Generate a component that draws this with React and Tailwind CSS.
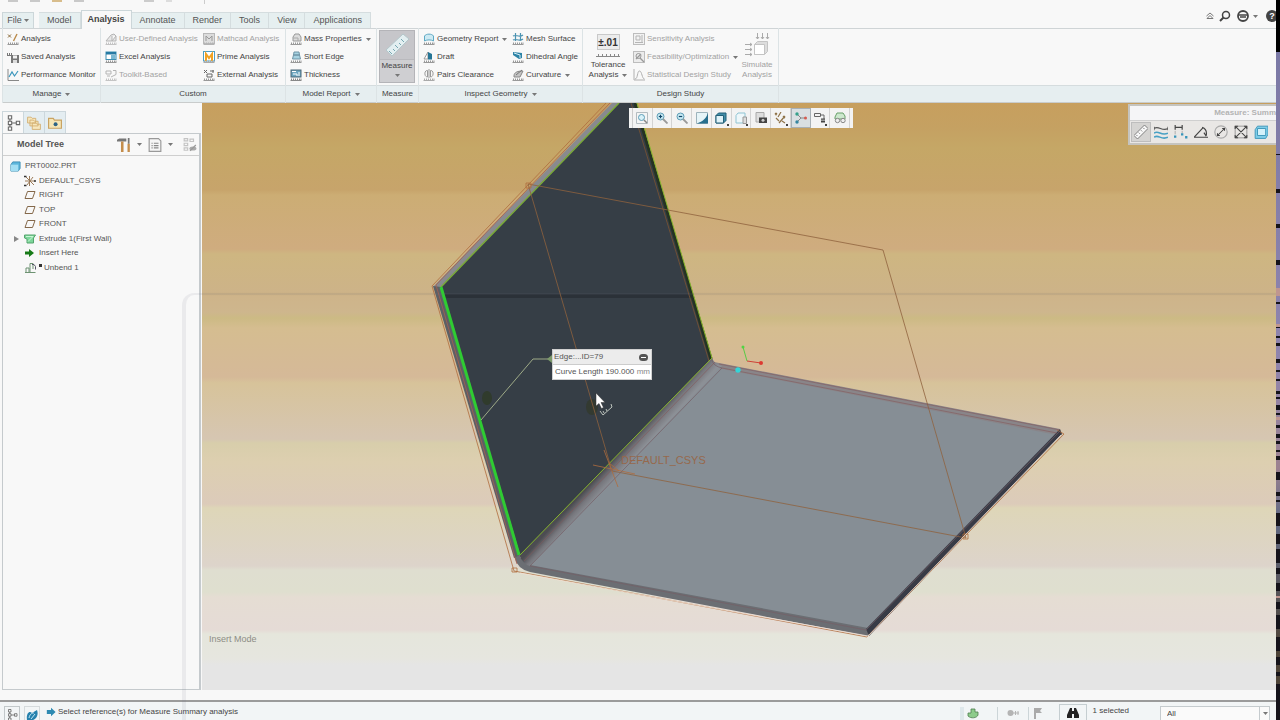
import React from "react";

const RULER = "M.5 11.5h11M1.5 11V9.5M3.5 11V9.5M5.5 11V9.5M7.5 11V9.5M9.5 11V9.5M11 11V9.5";

const drawings = {
  analysis: (
    <>
      <path d={RULER} stroke="#999" />
      <path d="M1 1.500l3 3M4 1.500L1 4.500" stroke="#8a6a3a" />
      <path d="M10 1L6.500 8" stroke="#b98a4a" strokeWidth="1.4" />
    </>
  ),
  saved: (
    <>
      <path d="M.5 2v2M2.5 2v2M4.5 2v2M0 4.5h6" stroke="#777" />
      <rect x="4" y="4" width="8" height="8" fill="#777" />
      <rect x="6" y="4.500" width="4" height="3" fill="#f2f2f2" />
      <rect x="6" y="9" width="4" height="3" fill="#ddd" />
    </>
  ),
  monitor: (
    <>
      <path d="M1 0v11.5h11" stroke="#888" />
      <path d="M2 8l3-5 2.500 4L11 2" stroke="#3d97bd" strokeWidth="1.2" />
    </>
  ),
  userDefined: (
    <>
      <path d={RULER} stroke="#c4c4c4" />
      <path d="M1 8l5-6 3-1 2 2-4 5zM7 3v5h4V3" stroke="#b5b5b5" fill="#e8e8e8" />
    </>
  ),
  excel: (
    <>
      <path d={RULER} stroke="#999" />
      <rect x="1" y="1" width="10" height="7.5" fill="#fff" stroke="#3c8fb2" />
      <rect x="1" y="1" width="10" height="2.5" fill="#267aa3" />
      <rect x="6" y="4" width="4.500" height="4" fill="#7ab8d2" />
    </>
  ),
  toolkit: (
    <>
      <path d={RULER} stroke="#c4c4c4" />
      <path d="M1 2h5v3H1zM8 1.500h3v4L6 8M2 7h3" stroke="#b4b4b4" />
    </>
  ),
  mathcad: (
    <>
      <rect x=".5" y=".5" width="11" height="10" fill="#dcdcdc" stroke="#b8b8b8" />
      <path d="M3 8V3l3 3 3-3v5" stroke="#999" />
      <path d={RULER} stroke="#b4b4b4" />
    </>
  ),
  prime: (
    <>
      <rect x=".5" y=".5" width="11" height="9.500" fill="#fff" stroke="#4d9fc4" />
      <path d="M3 10V3l3 4 3-4v7" stroke="#f0a224" strokeWidth="2" />
      <path d={RULER} stroke="#aaa" />
    </>
  ),
  external: (
    <>
      <path d={RULER} stroke="#999" />
      <path d="M1 1l3 3M4 1L1 4M10 1v3M7 2h4M4 8V5h5v3z" stroke="#666" />
    </>
  ),
  mass: (
    <>
      <path d={RULER} stroke="#999" />
      <path d="M3 8V4l2-3h4l2 3v4z" fill="#dcdcdc" stroke="#999" />
      <path d="M3 5h5v3" stroke="#aaa" />
    </>
  ),
  shortEdge: (
    <>
      <path d={RULER} stroke="#999" />
      <path d="M4 1h5l.5 3h-6zM2.500 8l1-4h6l1 4z" fill="#a6d2e1" stroke="#6f94a6" />
    </>
  ),
  thickness: (
    <>
      <path d={RULER} stroke="#888" />
      <rect x="1" y="1" width="10" height="7" fill="#6da6c0" stroke="#4b6676" />
      <path d="M2 2.500h4M3 5h4v2M9 3v4" stroke="#fff" />
    </>
  ),
  geometry: (
    <>
      <path d={RULER} stroke="#999" />
      <path d="M1.500 8V3C3 .5 9 .5 10.500 3v5C8 6.500 4 6.500 1.500 8z" fill="#cdeaf3" stroke="#5fa9c4" />
    </>
  ),
  draft: (
    <>
      <path d={RULER} stroke="#999" />
      <path d="M5 1v7H1z" fill="#fff" stroke="#999" />
      <path d="M5 1l4 2v5.500H5z" fill="#257596" />
    </>
  ),
  pairs: (
    <>
      <path d={RULER} stroke="#aaa" />
      <path d="M4.500 1.500C1 1 1 8 4.500 8zM7.500 1.500C11 1 11 8 7.500 8zM6 0v9" stroke="#999" />
    </>
  ),
  mesh: (
    <>
      <path d={RULER} stroke="#999" />
      <path d="M1 3c3-2 6 2 10-1M1 7c3-2 6 2 10-1M3.500 0v8M8.500 0v8" stroke="#4a92b1" strokeWidth="1.200" />
    </>
  ),
  dihedral: (
    <>
      <path d={RULER} stroke="#999" />
      <path d="M1 1l9 1v5L7 8 1 4z" fill="#2d83a6" />
      <path d="M2 2l6 2v3" stroke="#d6eef6" />
    </>
  ),
  curvature: (
    <>
      <path d={RULER} stroke="#999" />
      <path d="M2 7c0-4 4-5 9-5L8 8H2z" fill="#c4c4c4" stroke="#888" />
      <path d="M4 6l6-5" stroke="#777" />
    </>
  ),
  sensitivity: (
    <>
      <rect x=".5" y=".5" width="11" height="11" fill="#f2f2f2" stroke="#bdbdbd" />
      <path d="M3 3h4v4H3zM9 2v8M2 9.500h8" stroke="#b5b5b5" />
    </>
  ),
  feasibility: (
    <>
      <rect x=".5" y=".5" width="11" height="11" fill="#ececec" stroke="#bdbdbd" />
      <circle cx="5.500" cy="5" r="2.500" stroke="#999" />
      <path d="M7 7l4 4M3 8l5-5" stroke="#999" strokeWidth="1.300" />
    </>
  ),
  statistical: (
    <path d="M1 0v11h11M2 10c3 0 2-8 4.500-8S9 10 11.500 10" stroke="#b0b0b0" />
  ),
  part: (
    <>
      <path d="M1 4l2-3h8v7l-2 3H1z" fill="#5cb6dc" stroke="#3d8db3" />
      <path d="M1 4h8v7H1z" fill="#a3def3" />
    </>
  ),
  csys: (
    <>
      <path d="M2 2l8 8M9 2L3 10M5.500 1v10M1 6h10" stroke="#9b7a58" />
      <path d="M0 1.500h2.500M0 10.500h2.500M10 6h2" stroke="#333" strokeWidth="1.500" />
    </>
  ),
  plane: <path d="M3.500 2.500h7.500L8.500 9.500H1z" stroke="#84684a" />,
  extrude: (
    <>
      <path d="M.5 2h11l-2 3v5H3V6L.5 5z" fill="#7dd69a" stroke="#54a46d" />
      <path d="M2 3.500h7L4 8.500" stroke="#c9f7d6" />
    </>
  ),
  insert: <path d="M1 4.500h4V2l5 4-5 4V7.500H1z" fill="#177a17" />,
  unbend: (
    <>
      <path d="M1 10.500h10.500M2 10V6h3v4M6 10V1.500h3V7" stroke="#6d9272" />
      <path d="M8 2.500h2l1.500 2v3" stroke="#556" />
    </>
  ),
  treeTab: (
    <path d="M2.500 .5h2.500v2.500H2.500zM2.500 4.700h2.500v2.500H2.500zM2.500 9h2.500v2.500H2.500zM8.500 4.700H11v2.500H8.500zM3.700 3v1.700M3.700 7.200V9M5 6h3.500" stroke="#666" strokeWidth=".8" />
  ),
  folders: (
    <path d="M.5 1h3l1 1h3v4h-7zM2.500 3.500h3l1 1h3v4h-7zM4.500 6h3l1 1h3v4.500h-7z" fill="#f7e7bd" stroke="#d0a96a" strokeWidth=".7" />
  ),
  favorites: (
    <>
      <path d="M.5 2h4l1 1.500h6v7H.5z" fill="#f6e6b6" stroke="#c9a363" />
      <circle cx="6.500" cy="7" r="1.700" fill="#2d6385" />
    </>
  ),
  tools: (
    <>
      <path d="M0 1.500L2 .5h6v2.500H0z" fill="#777" />
      <path d="M4.500 3v9" stroke="#c48d4b" strokeWidth="2.200" />
      <path d="M10 0v5" stroke="#777" strokeWidth="1.500" />
      <path d="M10 5v7" stroke="#c48d4b" strokeWidth="2" />
    </>
  ),
  listDoc: (
    <>
      <path d="M1 .5h8l2 2v9H1z" fill="#f6f6f6" stroke="#999" />
      <path d="M3 4.500h1M5 4.500h4M3 6.500h1M5 6.500h4M3 8.500h1M5 8.500h4" stroke="#888" />
    </>
  ),
  hiddenTree: (
    <>
      <path d="M1 .5h3v2H1zM1 4.500h3v2H1zM1 8.500h3v2H1zM6 1h3v2H6z" stroke="#c4c4c4" />
      <ellipse cx="8.500" cy="9" rx="3" ry="1.800" fill="#aaa" />
      <path d="M6 11l5-5" stroke="#999" />
    </>
  ),
  refit: (
    <>
      <path d="M.5.5h11v11H.5z" fill="#f5f5f5" stroke="#b3bcc0" />
      <circle cx="5.500" cy="5.500" r="3" fill="#d9f1f8" stroke="#5d9db6" />
      <path d="M8 8l3 3" stroke="#888" strokeWidth="1.500" />
    </>
  ),
  zoomIn: (
    <>
      <circle cx="4.500" cy="4.500" r="3.500" fill="#c8e9f3" stroke="#5d9db6" />
      <path d="M2.800 4.500h3.400M4.500 2.800v3.400" stroke="#146" strokeWidth="1.200" />
      <path d="M7 7l4.500 4.500" stroke="#999" strokeWidth="1.800" />
    </>
  ),
  zoomOut: (
    <>
      <circle cx="4.500" cy="4.500" r="3.500" fill="#c8e9f3" stroke="#5d9db6" />
      <path d="M2.800 4.500h3.400" stroke="#146" strokeWidth="1.200" />
      <path d="M7 7l4.500 4.500" stroke="#999" strokeWidth="1.800" />
    </>
  ),
  repaint: (
    <>
      <path d="M.5.5h11v11H.5z" fill="#e6f4f8" stroke="#9db3bc" />
      <path d="M12 1C10 7 7 9 1 11.500h11z" fill="#286f8e" />
    </>
  ),
  shading: (
    <>
      <path d="M1 3.500L3.500 1H11v7.500L8.500 11H1z" fill="#438da8" stroke="#236178" />
      <path d="M1 3.500h7.500V11H1z" fill="#dff2f8" stroke="#236178" />
    </>
  ),
  views: (
    <>
      <path d="M1 3.500L3 1h7v7L8 11H1z" fill="#eef7fa" stroke="#8fc4d3" />
      <path d="M8 5h3.500v6.500H8z" fill="#ddd" stroke="#999" />
    </>
  ),
  camera: (
    <>
      <path d="M1 .5h8v9.500H1z" fill="#ddd" stroke="#aaa" />
      <rect x="4" y="5.500" width="8" height="5.500" fill="#444" />
      <circle cx="8" cy="8.200" r="1.500" fill="#ccc" />
    </>
  ),
  datum: (
    <path d="M1 1l2 2M3 1L1 3M7 0L4 5M2 6l3 3M9 4l2 2M11 4L5 11M8 9l3 2" stroke="#8f7348" strokeWidth="1.200" />
  ),
  spin: (
    <>
      <path d="M2 2l4 4h5M6 6l-4 4" stroke="#888" />
      <circle cx="2" cy="2" r="1.700" fill="#35a08b" />
      <circle cx="2" cy="10" r="1.700" fill="#3585a0" />
      <circle cx="10.500" cy="6" r="1.500" fill="#d55b50" />
    </>
  ),
  annotation: (
    <>
      <path d="M.5 1.500h6v3h-6zM6.500 3H10v4" stroke="#666" />
      <path d="M7 7h4M7 9.500h4M8 7v4M10 7v4" stroke="#444" />
    </>
  ),
  glasses: (
    <>
      <path d="M1 5l2-4h6l2 3v3H1z" fill="#cde8ce" stroke="#69a06a" />
      <circle cx="3.500" cy="8.500" r="2.200" fill="#eee" stroke="#888" />
      <circle cx="9" cy="8.500" r="2.200" fill="#eee" stroke="#888" />
    </>
  ),
  ruler: (
    <>
      <path d="M0 9L9 0l3 3-9 9z" fill="#f8f8f8" stroke="#777" strokeWidth=".8" />
      <path d="M3 9.500L2 8.500M5 7.500L4 6.500M7 5.500L6 4.500M9 3.500L8 2.500" stroke="#777" strokeWidth=".8" />
    </>
  ),
  length: (
    <>
      <path d="M0 1.500v3M12 1.500v3M0 3c4-3 7 3 12 0" stroke="#555" />
      <path d="M0 7c4-3 6 3 12 0M0 10.500c4-3 6 3 12 0" stroke="#48a0c4" strokeWidth="1.300" />
    </>
  ),
  distance: (
    <>
      <path d="M1 0v4M7 0v4M1 2h6" stroke="#444" />
      <path d="M1 5v3M7 5v2" stroke="#aaa" strokeWidth=".8" />
      <path d="M0 9h2v2H0zM6 7h2v2H6zM9.500 9.500h2v2h-2z" fill="#3995ba" />
    </>
  ),
  angle: (
    <path d="M0 10.500h12M0 10.500L8 2M7 2c3 1 4 4 3.500 7M8.500 6.500l2 3" stroke="#444" />
  ),
  diameter: (
    <>
      <circle cx="6" cy="6" r="5.300" stroke="#aaa" />
      <path d="M3 9l6-6M3 7v2h2M7 3h2v2" stroke="#444" strokeWidth=".9" />
    </>
  ),
  area: (
    <>
      <path d="M1 1h10v10H1z" stroke="#888" strokeWidth=".7" />
      <path d="M1 1l10 10M11 1L1 11M1 3.500V1h2.500M8.500 1H11v2.500M11 8.500V11H8.500M3.500 11H1V8.500" stroke="#444" strokeWidth=".9" />
    </>
  ),
  volume: (
    <>
      <path d="M1 4l2-3h9v7l-2 3.500H1z" fill="#7fcde8" stroke="#3b96b9" strokeWidth=".8" />
      <path d="M3 3h7v6H3z" fill="#d4f1fa" stroke="#3b96b9" strokeWidth=".8" />
    </>
  ),
  web: (
    <>
      <path d="M1 11C0 5 3 1 6 4l5-3c2 5-1 10-5 10z" fill="#2681ad" />
      <path d="M3 9c1-5 4-5 5-5M5 10l4-5" stroke="#bde5f5" />
    </>
  ),
  arrow: <path d="M1 3.500h5V1l5.500 5L6 11V8.500H1z" fill="#2d8ab2" />,
  regen: (
    <path d="M4 2h4v3h3v3c-1 3-7 4-10 1V6h3z" fill="#8dcb8b" stroke="#4e7e4f" strokeWidth=".8" />
  ),
  connection: (
    <>
      <circle cx="3.500" cy="6" r="3" fill="#b4b4b4" />
      <path d="M6 6h6M8.500 4v4M11 4v4" stroke="#b4b4b4" />
    </>
  ),
  flag: <path d="M2 12V1h8L8 4l2 2H4v6z" fill="#aaa" />,
  binoculars: (
    <>
      <path d="M3 1h2v10H0V8zM9 1H7v10h5V8z" fill="#222" />
      <path d="M5 4h2v3H5z" fill="#222" />
    </>
  ),
};

function Icon({ name, className = "size-3" }) {
  return (
    <svg viewBox="0 0 12 12" fill="none" aria-hidden="true" className={`shrink-0 ${className}`}>
      {drawings[name]}
    </svg>
  );
}

function Caret() {
  return (
    <svg viewBox="0 0 5 3" className="h-[3px] w-[5px] shrink-0" aria-hidden="true">
      <path d="M0 0h5L2.500 3z" fill="#777" />
    </svg>
  );
}

function Command({ icon, label, disabled, menu }) {
  return (
    <button
      type="button"
      disabled={disabled}
      className="flex h-[18px] items-center gap-0.5 whitespace-nowrap text-[#444] disabled:text-[#a2a2a2]"
    >
      <Icon name={icon} />
      <span>{label}</span>
      {menu && (
        <span className="ml-0.5">
          <Caret />
        </span>
      )}
    </button>
  );
}

function Column({ items, className = "" }) {
  return (
    <div className={`flex shrink-0 flex-col ${className}`}>
      {items.map((item) => (
        <Command key={item.label} {...item} />
      ))}
    </div>
  );
}

function Group({ title, menu, width, children }) {
  return (
    <section className={`flex shrink-0 flex-col border-r border-[#dce3e5] ${width}`}>
      <div className="flex h-[57px] pt-0.5 pl-1">{children}</div>
      <h2 className="flex h-[18px] items-center justify-center gap-1 border-y border-t-[#d5dcde] border-b-[#c9cccc] bg-[#e6eef0] text-[#444]">
        {title}
        {menu && <Caret />}
      </h2>
    </section>
  );
}

const tabs = ["Model", "Analysis", "Annotate", "Render", "Tools", "View", "Applications"];

function Header() {
  return (
    <header className="shrink-0 bg-[#f8f8f8]">
      <div className="flex h-2.5 items-start gap-3 pl-2">
        {["bg-[#c9c9c9]", "bg-[#c9c9c9]", "bg-[#d8bd8c]", "bg-[#c9c9c9]"].map((tone, i) => (
          <span key={i} className={`h-0.5 w-2.5 ${tone}`} />
        ))}
        <span className="ml-12 h-0.5 w-2.5 bg-[#cccccc]" />
        <span className="h-0.5 w-1.5 bg-[#dddddd]" />
        <span className="ml-5 h-1 w-px bg-[#cccccc]" />
      </div>
      <div className="flex h-[19px] items-end border-b border-[#cfd4d6] pl-0.5 text-[9px]">
        <button type="button" className="flex h-4 w-8 items-center justify-center gap-0.5 border border-b-0 border-[#ccd6d9] bg-[#e6eff0] text-[#555]">
          File <Caret />
        </button>
        <nav className="-mb-px ml-[5px] flex items-end">
          {tabs.map((tab) => (
            <button
              key={tab}
              type="button"
              className={
                tab === "Analysis"
                  ? "h-[19px] border border-b-0 border-[#ccd6d9] bg-[#f8f8f8] px-1.5 font-bold text-[#444]"
                  : "mb-px h-4 border-t border-r border-[#d5dddf] bg-[#e6eff0] px-2 text-[#555]"
              }
            >
              {tab}
            </button>
          ))}
        </nav>
        <div className="ml-auto flex h-full shrink-0 items-center gap-1 pb-1.5">
          <button type="button" aria-label="Minimize ribbon">
            <svg viewBox="0 0 10 8" className="h-2 w-2.5" fill="none" stroke="#777">
              <path d="M1.500 4L5 1l3.500 3M2 6.500l3-3 3 3z" />
            </svg>
          </button>
          <button type="button" aria-label="Search">
            <svg viewBox="0 0 12 12" className="size-3" fill="none" stroke="#444" strokeWidth="1.500">
              <circle cx="7" cy="5" r="3.500" />
              <path d="M4.500 7.500L1 11" strokeWidth="2" />
            </svg>
          </button>
          <button type="button" aria-label="Community" className="flex items-center gap-1 pl-0.5">
            <svg viewBox="0 0 12 12" className="size-3" fill="none">
              <circle cx="6" cy="6" r="5" stroke="#444" strokeWidth="1.800" />
              <path d="M2 5h8M3 7h6" stroke="#444" strokeWidth="1.300" />
            </svg>
            <Caret />
          </button>
          <button type="button" aria-label="Help" className="-mr-0.5 ml-1 grid size-3 place-items-center rounded-full bg-[#444] text-[9px] font-bold text-white">
            ?
          </button>
        </div>
      </div>
    </header>
  );
}

function Ribbon() {
  return (
    <div className="-mt-px flex shrink-0 pl-0.5 text-[8px]">
      <Group title="Manage" menu width="w-[99px] border-l">
        <Column
          items={[
            { icon: "analysis", label: "Analysis" },
            { icon: "saved", label: "Saved Analysis" },
            { icon: "monitor", label: "Performance Monitor" },
          ]}
        />
      </Group>
      <Group title="Custom" width="w-[185px]">
        <Column
          className="w-[98px]"
          items={[
            { icon: "userDefined", label: "User-Defined Analysis", disabled: true },
            { icon: "excel", label: "Excel Analysis" },
            { icon: "toolkit", label: "Toolkit-Based", disabled: true },
          ]}
        />
        <Column
          items={[
            { icon: "mathcad", label: "Mathcad Analysis", disabled: true },
            { icon: "prime", label: "Prime Analysis" },
            { icon: "external", label: "External Analysis" },
          ]}
        />
      </Group>
      <Group title="Model Report" menu width="w-[91px]">
        <Column
          items={[
            { icon: "mass", label: "Mass Properties", menu: true },
            { icon: "shortEdge", label: "Short Edge" },
            { icon: "thickness", label: "Thickness" },
          ]}
        />
      </Group>
      <Group title="Measure" width="w-[42px]">
        <button type="button" className="-ml-0.5 flex h-[53px] w-9 flex-col items-center border border-[#b4b4b8] bg-[#cfcfd2] text-[#444]">
          <span className="grid h-[29px] w-full place-items-center border-b border-[#b9b9bd] bg-[#c6c6ca]">
            <svg viewBox="0 0 28 26" className="h-[26px] w-7" fill="none">
              <path d="M3 18L20 2l6 5L9 24z" fill="#e3eff1" stroke="#b4c7cb" />
              <path d="M9 22l-3-3M12 19l-2-2M15 16l-3-3M18 13l-2-2M21 10l-3-3" stroke="#77a7b2" />
            </svg>
          </span>
          <span className="leading-3">Measure</span>
          <span className="pt-0.5">
            <Caret />
          </span>
        </button>
      </Group>
      <Group title="Inspect Geometry" menu width="w-[164px]">
        <Column
          className="w-[89px]"
          items={[
            { icon: "geometry", label: "Geometry Report", menu: true },
            { icon: "draft", label: "Draft" },
            { icon: "pairs", label: "Pairs Clearance" },
          ]}
        />
        <Column
          items={[
            { icon: "mesh", label: "Mesh Surface" },
            { icon: "dihedral", label: "Dihedral Angle" },
            { icon: "curvature", label: "Curvature", menu: true },
          ]}
        />
      </Group>
      <Group title="Design Study" width="w-[196px]">
        <button type="button" className="flex w-[42px] shrink-0 flex-col items-center pt-1 text-[#444]">
          <span className="grid h-4 w-[23px] place-items-center border border-[#c9c9c9] bg-[#ececec] text-[10px] font-bold text-[#333]">
            ±.01
          </span>
          <svg viewBox="0 0 24 6" className="mt-0.5 h-1.5 w-6" stroke="#888">
            <path d="M0 4.500h24M2.500 4V2M6.500 4V2M10.500 4V2M14.500 4V2M18.500 4V2M22.500 4V2" />
          </svg>
          <span className="pt-0.5 leading-[10px]">Tolerance</span>
          <span className="flex items-center gap-1 leading-[10px]">
            Analysis <Caret />
          </span>
        </button>
        <Column
          className="ml-1 w-[106px]"
          items={[
            { icon: "sensitivity", label: "Sensitivity Analysis", disabled: true },
            { icon: "feasibility", label: "Feasibility/Optimization", disabled: true, menu: true },
            { icon: "statistical", label: "Statistical Design Study", disabled: true },
          ]}
        />
        <button type="button" disabled className="flex w-9 shrink-0 flex-col items-center pt-0.5 text-[#a2a2a2]">
          <svg viewBox="0 0 26 26" className="size-[26px]" fill="none" stroke="#aaa">
            <path d="M10.500 12.500l3-3h10v10l-3 3h-10z" fill="#ddd" stroke="#c4c4c4" />
            <path d="M10.500 12.500h10v10h-10z" fill="#fff" stroke="#c4c4c4" />
            <path d="M13.500 1v6M18.500 1v6M23.500 1v6M12 5l1.500 2L15 5M17 5l1.500 2L20 5M22 5l1.500 2L25 5M1 12.500h7M1 17.500h7M1 22.500h7M6 11l2 1.500L6 14M6 16l2 1.500L6 19M6 21l2 1.500L6 24" />
          </svg>
          <span className="pt-0.5 leading-[10px]">Simulate</span>
          <span className="leading-[10px]">Analysis</span>
        </button>
      </Group>
      <div className="flex flex-1 flex-col">
        <div className="h-[57px]" />
        <div className="h-[18px] border-y border-t-[#d5dcde] border-b-[#c9cccc] bg-[#e6eef0]" />
      </div>
    </div>
  );
}

const features = [
  { icon: "csys", label: "DEFAULT_CSYS" },
  { icon: "plane", label: "RIGHT" },
  { icon: "plane", label: "TOP" },
  { icon: "plane", label: "FRONT" },
  { icon: "extrude", label: "Extrude 1(First Wall)", expandable: true },
  { icon: "insert", label: "Insert Here" },
  { icon: "unbend", label: "Unbend 1", marked: true },
];

function ModelTree() {
  return (
    <aside className="flex w-[202px] shrink-0 flex-col bg-[#f8f8f8] pt-2 pl-0.5">
      <div className="flex h-[22px] shrink-0">
        {["treeTab", "folders", "favorites"].map((icon, i) => (
          <button
            key={icon}
            type="button"
            aria-label={["Model Tree", "Folder Browser", "Favorites"][i]}
            className={`grid place-items-center border-t border-r border-[#ccd7dc] ${
              i === 0 ? "w-[22px] border-l bg-[#f8f8f8]" : "w-[21px] bg-[#e4edf1]"
            }`}
          >
            <Icon name={icon} className={i === 0 ? "size-4" : "size-3.5"} />
          </button>
        ))}
      </div>
      <div className="mr-px flex-1 border border-r-2 border-[#c5cacd]">
        <div className="flex h-[22px] items-center border-b border-[#cfcfcf] pl-3.5">
          <h1 className="flex-1 text-[9px] font-bold text-[#555]">Model Tree</h1>
          <button type="button" aria-label="Settings" className="flex items-center gap-1.5 pr-1.5">
            <Icon name="tools" className="size-[14px]" />
            <Caret />
          </button>
          <button type="button" aria-label="Show" className="flex items-center gap-1.5 pr-2.5">
            <Icon name="listDoc" className="size-[14px]" />
            <Caret />
          </button>
          <button type="button" aria-label="Hide items" className="pr-0.5">
            <Icon name="hiddenTree" className="size-[14px]" />
          </button>
        </div>
        <ul className="mt-[3px] grid h-[116px] grid-rows-8 text-[8px] text-[#555]">
          <li className="flex items-center gap-1 pl-[7px]">
            <Icon name="part" className="size-[11px]" />
            PRT0002.PRT
          </li>
          {features.map(({ icon, label, expandable, marked }) => (
            <li key={label} className="flex items-center pl-[11px]">
              <span className="flex w-2.5 shrink-0">
                {expandable && (
                  <svg viewBox="0 0 5 6" className="h-1.5 w-[5px]">
                    <path d="M0 0l5 3-5 3z" fill="#888" />
                  </svg>
                )}
              </span>
              <Icon name={icon} />
              <span className="flex items-center gap-0.5 pl-[3px]">
                {marked && <span className="mb-1 size-[3px] bg-[#333]" />}
                {label}
              </span>
            </li>
          ))}
        </ul>
      </div>
    </aside>
  );
}

const skyStops = [
  [103, "#c79f5e"], [128, "#c5a162"], [148, "#c5a766"], [190, "#c7a46b"], [195, "#ccad74"],
  [249, "#cfac7f"], [254, "#ceb681"], [292, "#cdb388"], [294, "#c8ae83"], [296, "#ceb48a"],
  [312, "#ceb68d"], [318, "#ccba84"], [328, "#d5bd90"], [377, "#d5b998"], [383, "#d7c39a"],
  [439, "#d6c6b2"], [443, "#d8ceab"], [462, "#ddcfb0"], [504, "#dccbba"], [508, "#ded6b8"],
  [566, "#ddd4cb"], [570, "#dfded0"], [592, "#dfdfcf"], [597, "#e5ddd3"], [630, "#e5dbd6"],
  [634, "#e5e6dc"], [658, "#e6e6df"], [665, "#e5e5e5"], [690, "#e5e5e5"],
];

function Model() {
  return (
    <svg
      viewBox="202 103 1074 587"
      preserveAspectRatio="xMidYMid slice"
      fill="none"
      className="absolute inset-0 h-full w-full"
      role="img"
      aria-label="Bent sheet metal part"
    >
      <defs>
        <linearGradient id="sky" x1="0" y1="0" x2="0" y2="1">
          {skyStops.map(([y, color]) => (
            <stop key={y} offset={(y - 103) / 587} stopColor={color} />
          ))}
        </linearGradient>
        <linearGradient id="bend" gradientUnits="userSpaceOnUse" x1="615" y1="457" x2="626" y2="467">
          <stop offset="0" stopColor="#4c4c51" />
          <stop offset=".5" stopColor="#77777d" />
          <stop offset="1" stopColor="#8c9096" />
        </linearGradient>
      </defs>
      <rect x="202" y="103" width="1074" height="587" fill="url(#sky)" />

      <path d="M519 554L712 358q2 6 10 8L1060 430 868 630 530 566z" fill="#868e95" />
      <path d="M714 362l346 67-3 6-340-67z" fill="#898589" />
      <path d="M515 556l4-2q3 9 11 11L868 628v8L530 572q-13-3-16-16z" fill="#6b6e73" />
      <path d="M519 554L712 358q2 6 10 8L530 566q-8-2-11-12z" fill="url(#bend)" />
      <path d="M1060 429l2 5L869 636l-3-7z" fill="#383b46" />

      <path d="M612 103h8L441 288l-8-1z" fill="#888a8f" />
      <path d="M433 286l8 1 79 268-6 3z" fill="#5c6065" />
      <path d="M619 103h17l76 255-192 197-79-268z" fill="#363e46" />
      <path d="M444 296h249" stroke="#2b3138" strokeWidth="4" />
      <path d="M635 103l76 256" stroke="#253322" strokeWidth="3" />
      <path d="M631 103l78 258" stroke="#6e5036" />
      <path d="M637 103l75 255-192 197" stroke="#86b52c" />
      <path d="M619 103L441 287" stroke="#79a938" strokeWidth="1.500" />
      <path d="M441 287l78 268" stroke="#2fcb32" strokeWidth="3" />
      <ellipse cx="487" cy="398" rx="5" ry="7" fill="#303b2c" />
      <ellipse cx="592" cy="407" rx="6" ry="8" fill="#333a31" />

      <g stroke="#b06c3e" strokeWidth=".8">
        <path d="M606 103L432 286l82 285 353 66 197-203-7-4" />
        <path d="M610 103L436 285l81 279" stroke="#a85e50" />
        <path d="M528 184l355 66 83 288-354-67z" stroke="#8f623d" />
        <path d="M526 183h5v5h-5zM963 534h5v5h-5zM512 568h5v4h-5z" />
        <path d="M593 465l42 9M604 450l14 37M609 463l10 8" />
      </g>
      <path d="M712 360q1 6 10 8L530 566M530 566l336 64 194-199" stroke="#755f66" strokeWidth=".7" />
      <path d="M719 364l341 66M722 368l335 65M715 362L524 561" stroke="#84595a" strokeWidth=".6" />
      <path d="M520 573l348 63 193-201" stroke="#f2e2d5" strokeWidth=".8" />
      <path d="M481 420l52-61h19" stroke="#9eaa87" />
      <path d="M547 359l5-4v8z" fill="#7c996a" />

      <path d="M743 347l4 14" stroke="#58cb45" />
      <path d="M747 361l14 2" stroke="#cf4235" />
      <circle cx="743" cy="347" r="1.500" fill="#52d443" />
      <circle cx="761" cy="363" r="2" fill="#dd3931" />
      <circle cx="738" cy="370" r="2.700" fill="#34d4d7" />

      <path d="M596 393v13l3-2.500 2.500 5 2-1-2.500-5h4z" fill="#fff" stroke="#333" strokeWidth=".5" />
      <path d="M600 411l3 4 9-8-1-3M604 413l-1-2M607 411l-1-2" stroke="#bdc4bd" />
      <text x="621" y="464" fontSize="11" fill="#96694c" fontFamily="Liberation Sans, sans-serif">
        DEFAULT_CSYS
      </text>
    </svg>
  );
}

const viewTools = [
  ["refit", "Refit"], ["zoomIn", "Zoom In"], ["zoomOut", "Zoom Out"], ["repaint", "Repaint"],
  ["shading", "Display Style"], ["views", "Saved Orientations"], ["camera", "View Manager"],
  ["datum", "Datum Display Filters"], ["spin", "Spin Center"], ["annotation", "Annotation Display"],
  ["glasses", "Perspective"],
];

const measureTools = [
  ["ruler", "Summary"], ["length", "Length"], ["distance", "Distance"], ["angle", "Angle"],
  ["diameter", "Diameter"], ["area", "Area"], ["volume", "Volume"],
];

function Viewport() {
  return (
    <main className="relative min-w-0 flex-1 overflow-hidden bg-[#ceb68d]">
      <Model />
      <div className="absolute top-[5px] left-[427px] flex bg-[#f3f3f3] px-[3px]">
        <div className="grid h-5 w-[218px] grid-cols-11 border-l border-[#ccc]">
          {viewTools.map(([icon, label]) => (
            <button
              key={icon}
              type="button"
              aria-label={label}
              className={`relative grid place-items-center border-r ${
                icon === "spin" ? "border border-[#a8b0b5] bg-[#d9dfe2]" : "border-[#d3d3d3]"
              }`}
            >
              <Icon name={icon} className="size-3" />
              {["shading", "views", "datum", "annotation"].includes(icon) && (
                <span className="absolute right-0.5 bottom-0.5 size-0.5 bg-[#444]" />
              )}
            </button>
          ))}
        </div>
      </div>
      <section className="absolute top-px right-0 w-[148px] overflow-hidden border-2 border-r-0 border-[#c5c4bf] bg-[#e9e7e5] text-[8px]">
        <h2 className="flex h-3.5 items-center justify-end bg-[#f5f5f7] font-bold whitespace-nowrap text-[#b3b3b3]">
          Measure: Summ
        </h2>
        <div className="flex h-[23px] items-center border-t border-[#cfcfcf] pl-px">
          {measureTools.map(([icon, label]) => (
            <button
              key={icon}
              type="button"
              aria-label={label}
              className={`grid size-5 shrink-0 place-items-center ${
                icon === "ruler" ? "border border-[#bdbdbd] bg-[#d5d4d2]" : ""
              }`}
            >
              <Icon name={icon} className="size-[14px]" />
            </button>
          ))}
        </div>
      </section>
      <section className="absolute top-[246px] left-[350px] w-[100px] border border-[#d0d0d0] bg-white text-[8px] text-[#555]">
        <h2 className="flex h-[15px] items-center justify-between border-b border-[#ccc] bg-[#ececec] pr-[3px] pl-px">
          Edge:...ID=79
          <button type="button" aria-label="Collapse" className="grid h-[7px] w-[9px] place-items-center rounded-sm bg-[#555]">
            <span className="h-px w-[5px] bg-white" />
          </button>
        </h2>
        <p className="flex h-3.5 items-center justify-between pr-px pl-0.5">
          <span>Curve Length</span>
          <span>190.000</span>
          <span className="text-[#888]">mm</span>
        </p>
      </section>
      <p className="absolute bottom-[45px] left-[7px] text-[9px] leading-3 text-[#8d8d85]">Insert Mode</p>
    </main>
  );
}

function StatusBar() {
  return (
    <footer className="mt-2.5 flex h-5 shrink-0 items-end overflow-hidden border-t-2 border-[#9b9b9b] bg-[#f2f5f6] text-[8px] text-[#444]">
      <button type="button" aria-label="Toggle tree" className="ml-1 grid h-3.5 w-4 shrink-0 place-items-center border border-b-0 border-[#c2c8ca] pt-0.5">
        <Icon name="treeTab" />
      </button>
      <button type="button" aria-label="Toggle browser" className="ml-1 grid h-3.5 w-4 shrink-0 place-items-center border border-b-0 border-[#d5dadc] pt-0.5">
        <Icon name="web" />
      </button>
      <p className="ml-1.5 flex h-4 items-center gap-0.5 whitespace-nowrap">
        <Icon name="arrow" className="size-[10px]" />
        Select reference(s) for Measure Summary analysis
      </p>
      <div className="ml-auto flex h-full shrink-0 items-end pr-1.5">
        <span className="border-l-4 border-[#dfe8eb] pr-[18px] pb-px pl-[3px]">
          <Icon name="regen" />
        </span>
        <span className="border-l border-[#ccd5d8] px-[6px] pb-px">
          <Icon name="connection" className="h-3 w-[18px]" />
        </span>
        <span className="border-l border-[#ccd5d8] pr-[15px] pb-px pl-[3px]">
          <Icon name="flag" />
        </span>
        <button type="button" aria-label="Find" className="grid h-4 w-7 place-items-center border border-b-0 border-[#c5ced1]">
          <Icon name="binoculars" />
        </button>
        <span className="h-3.5 pr-[31px] pl-1.5 leading-[10px]">1 selected</span>
        <div className="relative flex">
          <select
            aria-label="Selection filter"
            className="h-3.5 w-[110px] appearance-none border border-b-0 border-[#c5cbce] bg-[#fafafa] pl-1.5 text-[8px] leading-3"
          >
            <option>All</option>
          </select>
          <span className="pointer-events-none absolute inset-y-0 right-0 grid w-[11px] place-items-center border-l border-[#c5cbce]">
            <Caret />
          </span>
        </div>
      </div>
    </footer>
  );
}

const stripLines = [
  [154, 1], [189, 4], [224, 4], [260, 5], [302, 2], [325, 3], [336, 2], [343, 3], [359, 4],
  [370, 2], [379, 2], [391, 3], [397, 2], [405, 5], [413, 2], [425, 3], [434, 4], [441, 3],
  [450, 2], [456, 4], [472, 8], [492, 4], [500, 2], [513, 13], [534, 10], [549, 14], [568, 6],
  [583, 8], [602, 7], [615, 14], [637, 14], [657, 8], [672, 4], [684, 36],
];

function Backdrop() {
  return (
    <svg viewBox="0 0 4 720" preserveAspectRatio="none" className="h-full w-1 shrink-0" aria-hidden="true">
      <defs>
        <linearGradient id="dusk" x1="0" y1="0" x2="0" y2="1">
          <stop offset="0" stopColor="#7777a4" />
          <stop offset=".5" stopColor="#9085ae" />
          <stop offset=".65" stopColor="#9c8290" />
          <stop offset=".72" stopColor="#626a85" />
          <stop offset=".9" stopColor="#4e4438" />
        </linearGradient>
      </defs>
      <rect width="4" height="720" fill="url(#dusk)" />
      <rect width="4" height="52" fill="#000" />
      {stripLines.map(([y, h]) => (
        <rect key={y} y={y} width="4" height={h} fill="#15131a" />
      ))}
      <path d="M0 288h4v8H0zM0 324h4v3H0zM0 417h4v3H0zM0 596h4v2H0z" fill="#bf9690" />
    </svg>
  );
}

export default function App() {
  return (
    <div className="flex h-screen overflow-hidden font-['Liberation_Sans',Arial,sans-serif]">
      <div className="relative flex min-w-0 flex-1 flex-col overflow-hidden bg-[#f8f8f8]">
        <Header />
        <Ribbon />
        <div className="flex min-h-0 flex-1">
          <ModelTree />
          <Viewport />
        </div>
        <StatusBar />
        <div className="pointer-events-none absolute top-[293px] right-0 bottom-0 left-[182px] rounded-tl-xl border-t-2 border-l-4 border-[#75758a]/10" />
      </div>
      <Backdrop />
    </div>
  );
}
